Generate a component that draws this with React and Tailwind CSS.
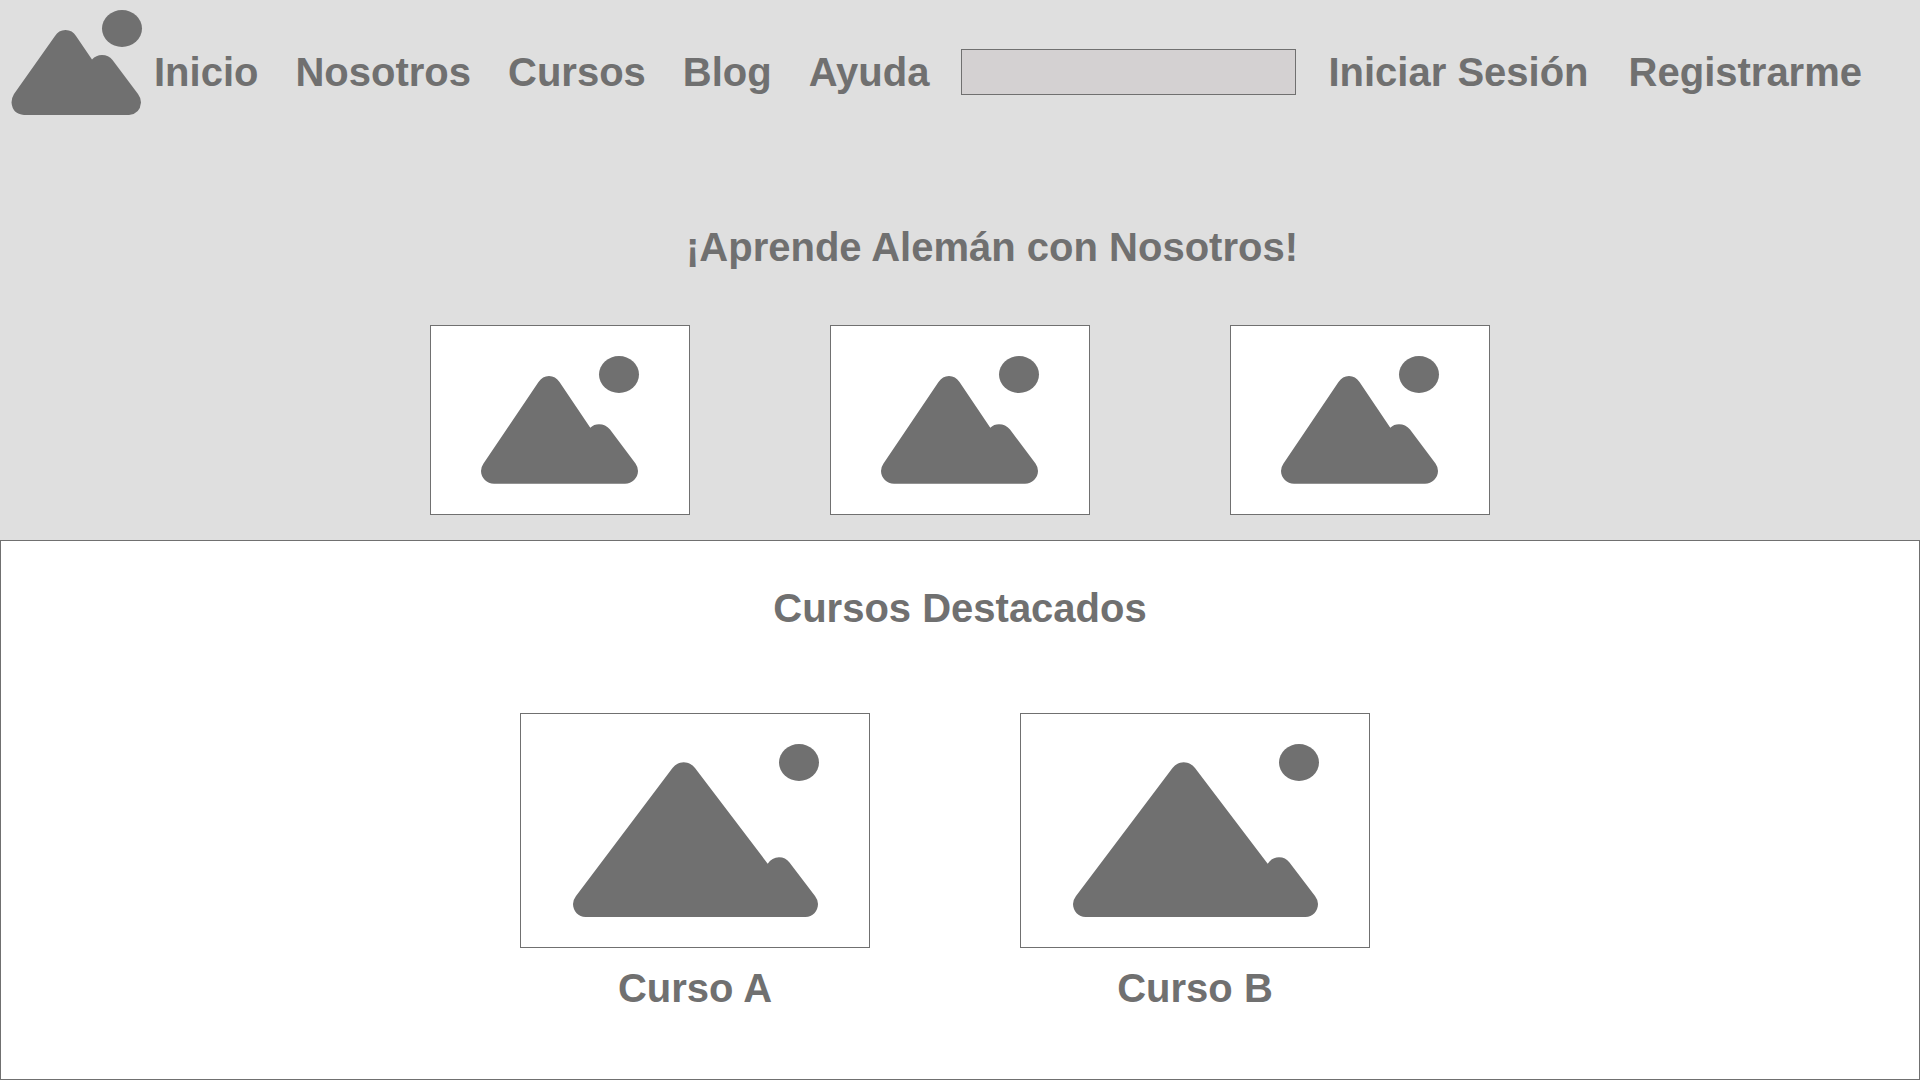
const links = ["Inicio", "Nosotros", "Cursos", "Blog", "Ayuda"];
const courses = ["Curso A", "Curso B"];

function Logo() {
  return (
    <svg className="block h-36 w-[154px]" viewBox="0 0 154 144" fill="#707070" aria-hidden="true">
      <ellipse cx="122" cy="28.5" rx="20" ry="18.5" />
      <path d="M55 36Q58.5 30 65.5 30Q72.5 30 76 36L92 59.5Q96 55 102 55Q108.5 55 112.500 60L138 94Q141 98 141 102.500Q140 114 129 115H24Q12.500 114 11.500 102.500Q11.500 98 14 94Z" />
    </svg>
  );
}

function SmallPicture() {
  return (
    <svg className="block h-[188px] w-[258px]" viewBox="1 1 258 188" fill="#707070" role="img" aria-label="Imagen">
      <ellipse cx="189" cy="49.5" rx="20" ry="18.5" />
      <path d="M108.500 57Q112.500 51 119 51Q125.500 51 129.500 57L160.300 102.700Q164 99.300 169 99.300Q175.500 99.300 180 104.500L205.500 138.500Q208 142 208 146C208 153 202 158.700 195 158.700H64C57 158.700 51 153 51 146Q51 142 53.500 138.500Z" />
    </svg>
  );
}

function LargePicture() {
  return (
    <svg className="block h-[233px] w-[348px]" viewBox="1 1 348 233" fill="#707070" role="img" aria-label="Imagen">
      <ellipse cx="279" cy="49.5" rx="20" ry="18.5" />
      <path d="M152.500 55Q157 49.200 163.700 49.200Q170.500 49.200 175 55L247.700 150.700Q252 144.200 259 144.200Q265.500 144.200 269.500 149.500L295 183Q298 187 298 191C298 198 292.500 204 285.500 204H65.500C58.500 204 53 198 53 191Q53 187 56 183Z" />
    </svg>
  );
}

export default function App() {
  return (
    <div className="flex min-h-screen flex-col bg-[#dfdfdf] font-['Arial_Rounded_MT_Bold','Liberation_Sans',sans-serif] text-[40px] leading-12 font-bold text-[#707070]">
      <header className="flex h-36 items-center pr-[58px]">
        <a href="#inicio" aria-label="Portada" className="shrink-0">
          <Logo />
        </a>
        <nav className="flex gap-[37px]">
          {links.map((name) => (
            <a key={name} href={`#${name.toLowerCase()}`}>{name}</a>
          ))}
        </nav>
        <input
          type="search"
          aria-label="Buscar"
          className="mx-8 h-[46px] min-w-0 flex-1 border border-[#707070] bg-[#d4d1d2] px-3 text-2xl outline-none"
        />
        <div className="flex gap-10 whitespace-nowrap">
          <a href="#sesion">Iniciar Sesión</a>
          <a href="#registro">Registrarme</a>
        </div>
      </header>

      <section className="flex flex-col items-center pt-[79px] pb-[25px]">
        <h1 className="pl-16">¡Aprende Alemán con Nosotros!</h1>
        <div className="mt-[54px] flex gap-[140px]">
          {[1, 2, 3].map((n) => (
            <div key={n} className="border border-[#707070] bg-white">
              <SmallPicture />
            </div>
          ))}
        </div>
      </section>

      <main className="flex flex-1 flex-col items-center border border-[#707070] bg-white pt-[43px]">
        <h2>Cursos Destacados</h2>
        <div className="mt-[81px] flex gap-[150px] pr-[30px]">
          {courses.map((name) => (
            <figure key={name}>
              <div className="border border-[#707070]">
                <LargePicture />
              </div>
              <figcaption className="mt-4 text-center">{name}</figcaption>
            </figure>
          ))}
        </div>
      </main>
    </div>
  );
}
